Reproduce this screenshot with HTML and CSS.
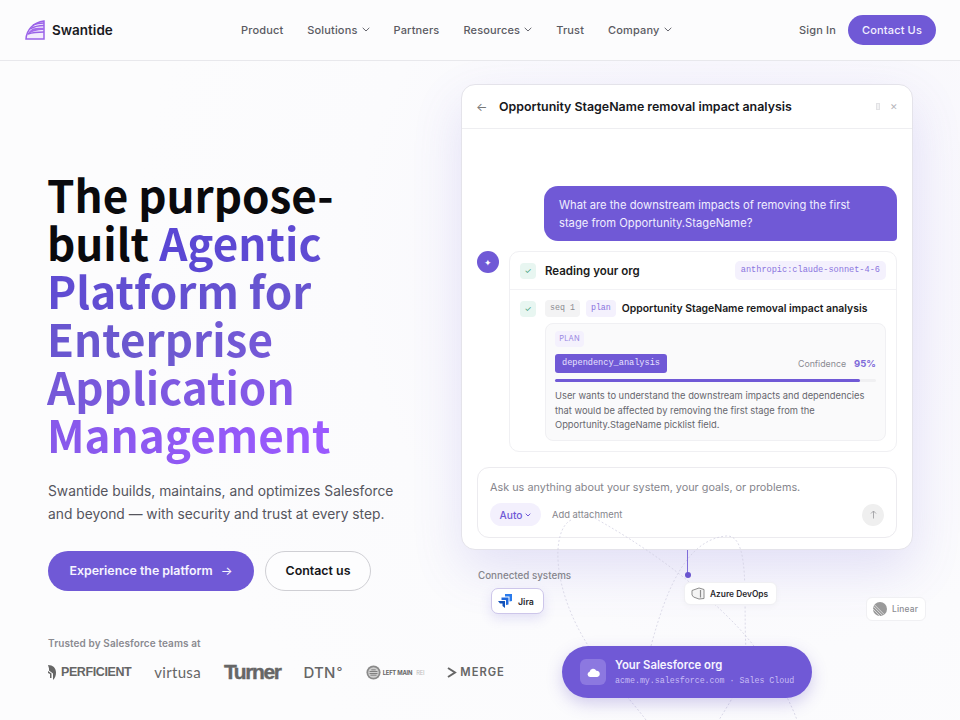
FILE: index.html
```html
<!DOCTYPE html>
<html lang="en">
<head>
<meta charset="utf-8">
<title>Swantide</title>
<link rel="stylesheet" href="styles.css">
</head>
<body>
<header class="topbar">
  <a class="brand">
    <svg class="brand-mark" width="20" height="20" viewBox="0 0 20 20" fill="none" stroke="#9a63e8" stroke-width="1.3">
      <path d="M1 19 C1.500 10 8 2.500 19 1 V19 Z" fill="#f3ebfd" stroke-width="1.500"/>
      <path d="M5 9 C9 6.500 14 5.500 19 5.500 M8 5 C11 3.600 15 3 19 3" />
      <path d="M1.200 19 C2 14 4 11 8 8.500 C12 7.800 15 7.800 19 7.800 V10 C12 10 6 11.500 2 15.500Z" fill="#a56cec" stroke="none"/>
      <path d="M3 14 C8 12.300 13 12 19 12" stroke-width="1.500"/>
    </svg>
    <span class="brand-name">Swantide</span>
  </a>
  <nav class="nav">
    <a>Product</a>
    <a>Solutions <svg class="caret" width="8" height="5" viewBox="0 0 8 5"><path d="M.7.8 4 4l3.300-3.200"/></svg></a>
    <a>Partners</a>
    <a>Resources <svg class="caret" width="8" height="5" viewBox="0 0 8 5"><path d="M.7.8 4 4l3.300-3.200"/></svg></a>
    <a>Trust</a>
    <a>Company <svg class="caret" width="8" height="5" viewBox="0 0 8 5"><path d="M.7.8 4 4l3.300-3.200"/></svg></a>
  </nav>
  <div class="top-actions">
    <a class="signin">Sign In</a>
    <a class="contact-pill">Contact Us</a>
  </div>
</header>

<main class="hero">
  <section class="intro">
    <h1 class="headline">The purpose-built <span class="grad">Agentic Platform for Enterprise Application Management</span></h1>
    <p class="lede">Swantide builds, maintains, and optimizes Salesforce and beyond — with security and trust at every step.</p>
    <div class="cta-row">
      <a class="btn-primary">Experience the platform <span class="arrow">→</span></a>
      <a class="btn-ghost">Contact us</a>
    </div>
    <p class="trusted">Trusted by Salesforce teams at</p>
    <div class="logos">
      <span class="logo logo-perficient"><svg width="10" height="15" viewBox="0 0 10 15"><path d="M0 0c5 0 8 3 8 7.500 0 3-1 5.500-3 7.500V8.500L1 5.500V3.500L0 0Z" fill="#666"/><path d="M0 6l3.500 2.500V13H2V9L0 8Z" fill="#666"/></svg>PERFICIENT</span>
      <span class="logo logo-virtusa">virtusa</span>
      <span class="logo logo-turner">Turner</span>
      <span class="logo logo-dtn">DTN<sup class="deg">°</sup></span>
      <span class="logo logo-left"><svg width="15" height="15" viewBox="0 0 17 17"><circle cx="8.500" cy="8.500" r="8" fill="#8a8a8a"/><circle cx="8.500" cy="8.500" r="6" fill="#cfcfcf"/><path d="M4 7h9v1H4zm0 2h9v1H4zm1 2h7v1H5zM6 5h5v1H6z" fill="#666"/></svg>LEFT MAIN<em class="rei">REI</em></span>
      <span class="logo logo-merge"><svg width="10" height="11" viewBox="0 0 10 11"><path d="M1 1l7 4.500-7 4.500" fill="none" stroke="#666" stroke-width="2"/></svg>MERGE</span>
    </div>
  </section>

  <section class="stage">
    <div class="panel">
      <div class="panel-head">
        <span class="back">←</span>
        <h2 class="panel-title">Opportunity StageName removal impact analysis</h2>
        <span class="head-tools"><i class="tool-box"></i><span class="tool-x">✕</span></span>
      </div>
      <div class="panel-body">
        <div class="bubble">What are the downstream impacts of removing the first stage from Opportunity.StageName?</div>
        <div class="reply">
          <span class="avatar">✦</span>
          <div class="card">
            <div class="card-head">
              <span class="check">✓</span>
              <span class="card-title">Reading your org</span>
              <span class="model-chip">anthropic:claude-sonnet-4-6</span>
            </div>
            <div class="step">
              <div class="step-row">
                <span class="check">✓</span>
                <span class="tag tag-grey">seq 1</span>
                <span class="tag tag-violet">plan</span>
                <span class="step-title">Opportunity StageName removal impact analysis</span>
              </div>
              <div class="plan-box">
                <span class="plan-label">PLAN</span>
                <div class="plan-row">
                  <span class="plan-type">dependency_analysis</span>
                  <span class="conf-label">Confidence</span>
                  <span class="conf-val">95%</span>
                </div>
                <div class="meter"><div class="meter-fill" style="width:95%"></div></div>
                <p class="plan-text">User wants to understand the downstream impacts and dependencies that would be affected by removing the first stage from the Opportunity.StageName picklist field.</p>
              </div>
            </div>
          </div>
        </div>
        <div class="composer">
          <div class="placeholder">Ask us anything about your system, your goals, or problems.</div>
          <div class="composer-row">
            <span class="auto-chip">Auto <svg width="6" height="4" viewBox="0 0 6 4"><path d="M.7.7 3 3 5.300.7" fill="none" stroke="#6f59d6" stroke-width="1"/></svg></span>
            <span class="attach">Add attachment</span>
            <span class="send"><svg width="7" height="9" viewBox="0 0 7 9" fill="none" stroke="#a0a0a4" stroke-width=".9"><path d="M3.500 8.500V1M1 3.500 3.500 1 6 3.500"/></svg></span>
          </div>
        </div>
      </div>
    </div>

    <svg class="wires" width="499" height="660" viewBox="0 0 499 660" fill="none" stroke="#cfcddf" stroke-width=".7" stroke-dasharray="2 2">
      <path d="M110 459 C90 469 90 529 130 589 C150 619 170 639 185 659"/>
      <path d="M130 455 C200 494 240 529 270 559 C300 589 325 629 336 659"/>
      <path d="M190 585 C205 529 225 479 265 475 C290 473 282 539 285 589 C285 619 270 639 258 659"/>
    </svg>
    <i class="wire-stem"></i>
    <i class="wire-dot"></i>

    <span class="sys-label">Connected systems</span>
    <div class="node node-jira">
      <svg width="14" height="14" viewBox="0 0 14 14"><path d="M7 0H14V7L11.500 7.500V2.500H7Z" fill="#2a7bec"/><path d="M3.500 3.500H10.500V10.500L8 11V6H3.500Z" fill="#1f68dc"/><path d="M0 7H7V14L4.500 12V9.500H2Z" fill="#1252b8"/></svg>
      Jira
    </div>
    <div class="node node-azure">
      <svg width="14" height="13" viewBox="0 0 14 13" fill="#f4f4f4" stroke="#8d8d8d" stroke-width="1"><path d="M1 3.500 8 1l5 1.500v9L8 12 2.500 10 1 8Z"/><path d="M9.500 3V10.500" stroke-width="1.200"/></svg>
      Azure DevOps
    </div>
    <div class="node node-linear">
      <svg width="14" height="14" viewBox="0 0 14 14"><circle cx="7" cy="7" r="7" fill="#9a9a9a"/><path d="M0 7l7 7M.6 4.500 9.500 13.400M1.500 2.800l9.700 9.700" stroke="#e8e8e8" stroke-width=".8"/></svg>
      Linear
    </div>
    <div class="org-pill">
      <span class="org-icon"><svg width="13" height="9" viewBox="0 0 13 9"><path d="M3 9A2.700 2.700 0 0 1 2.600 3.700 3.600 3.600 0 0 1 9.300 2.700 3.200 3.200 0 0 1 10.300 9Z" fill="#fff"/></svg></span>
      <span class="org-text">
        <span class="org-title">Your Salesforce org</span>
        <span class="org-sub">acme.my.salesforce.com · Sales Cloud</span>
      </span>
    </div>
  </section>
</main>
</body>
</html>
```

FILE: styles.css
```css
* { box-sizing: border-box; }
html, body { margin: 0; height: 720px; overflow: hidden; }
body { background: #fcfcfd; font-family: Inter, "Liberation Sans", sans-serif; color: #111; }

.topbar { height: 61px; display: flex; align-items: center; padding: 0 24px 1px 25px; border-bottom: 1px solid #e8e8ec; background: #fcfcfd; }
.brand { display: flex; align-items: center; gap: 7px; width: 216px; }
.brand-mark { display: block; }
.brand-name { font-size: 13.500px; font-weight: 600; color: #1a1a1f; }
.nav { display: flex; gap: 24px; font-size: 11px; font-weight: 500; color: #5a5a62; letter-spacing: .15px; }
.nav a { display: flex; align-items: center; gap: 4px; }
.caret { fill: none; stroke: #66666e; stroke-width: 1; }
.top-actions { margin-left: auto; display: flex; align-items: center; gap: 12px; font-size: 11px; font-weight: 500; letter-spacing: .15px; }
.signin { color: #5a5a62; }
.contact-pill { height: 30px; width: 88px; border-radius: 15px; background: #7059d6; color: #f3f0ff; display: flex; align-items: center; justify-content: center; }

.hero { position: relative; display: flex; height: 659px; overflow: hidden; background: radial-gradient(circle at 78% 30%, #f5f3fc 0, #fbfbfd 45%, #fcfcfd 70%); }
.intro { flex: 0 0 461px; min-width: 0; padding: 109px 0 0 48px; }
.headline { margin: 0 0 0 -1px; width: 300px; font-family: "Noto Sans CJK SC", "Noto Sans", sans-serif; font-size: 44px; line-height: 48px; font-weight: 700; color: #0a0a0d; }
.grad { background: linear-gradient(90deg, #5a46d4 0%, #6c59cf 45%, #9b59ff 100%); -webkit-background-clip: text; background-clip: text; color: transparent; }
.lede { margin: 22px 0 0; width: 360px; font-size: 13.800px; line-height: 23px; color: #55555d; }
.cta-row { display: flex; gap: 11px; margin-top: 25px; }
.btn-primary { height: 40px; width: 206px; padding-bottom: 1px; border-radius: 20px; background: #7059d6; color: #f6f4ff; font-size: 12.400px; font-weight: 600; display: flex; align-items: center; justify-content: center; gap: 8px; }
.arrow { font-weight: 400; }
.btn-ghost { height: 40px; width: 106px; padding-bottom: 1px; border-radius: 20px; border: 1px solid #cfcfd4; background: #fdfdfe; color: #16161a; font-size: 12.400px; font-weight: 600; display: flex; align-items: center; justify-content: center; }
.trusted { margin: 46px 0 0; font-size: 10px; line-height: 13px; font-weight: 600; color: #8a8a90; letter-spacing: .1px; }
.logos { display: flex; align-items: center; gap: 23px; height: 24px; margin-top: 10px; color: #666; }
.logo { display: inline-flex; align-items: center; white-space: nowrap; }
.logo-perficient { gap: 3px; font-size: 12.500px; font-weight: 700; letter-spacing: -.4px; font-family: "Liberation Sans", sans-serif; }
.logo-virtusa { font-size: 15px; font-family: Lato, sans-serif; letter-spacing: .3px; }
.logo-turner { font-size: 21px; font-weight: 800; letter-spacing: -1.400px; font-family: "Liberation Sans", sans-serif; -webkit-text-stroke: .4px #666; }
.logo-dtn { font-size: 15px; font-weight: 500; letter-spacing: .2px; }
.deg { font-size: 13px; line-height: 0; margin-left: 1px; }
.logo-left { gap: 2px; font-size: 5.800px; font-weight: 700; letter-spacing: -.2px; }
.rei { font-style: normal; color: #bbb; font-weight: 400; margin-left: 2px; }
.logo-merge { gap: 3px; font-size: 11.200px; font-weight: 600; letter-spacing: 1px; }

.stage { position: relative; flex: 1; padding-top: 23px; }
.panel { position: relative; width: 452px; height: 466px; border: 1px solid #e4e3ea; border-radius: 14px; background: #fff; box-shadow: 0 20px 50px rgba(108, 92, 212, .16); }
.panel-head { height: 44px; padding: 0 14px; display: flex; align-items: center; border-bottom: 1px solid #eeeef1; }
.back { width: 23px; font-size: 12px; color: #777; }
.panel-title { margin: 0; font-size: 12.400px; font-weight: 600; color: #17171c; }
.head-tools { margin-left: auto; display: flex; align-items: center; gap: 10px; }
.tool-box { width: 4px; height: 7px; border: 1px solid #e2e2e5; background: #f2f2f3; }
.tool-x { font-size: 9px; color: #b5b5ba; }
.panel-body { padding: 57px 15px 0; display: flex; flex-direction: column; }
.bubble { align-self: flex-end; width: 353px; height: 55px; padding: 11px 15px 0; border-radius: 14px 14px 4px 14px; background: #7059d6; color: #f1eeff; font-size: 11.200px; line-height: 17.500px; }
.reply { display: flex; gap: 10px; margin-top: 10px; }
.avatar { flex: 0 0 22px; height: 22px; border-radius: 50%; background: #7059d6; color: #fff; font-size: 9px; display: flex; align-items: center; justify-content: center; }
.card { flex: 1; height: 201px; border: 1px solid #f0f0f3; border-radius: 10px; background: #fff; }
.card-head { height: 38px; padding: 0 10px; display: flex; align-items: center; border-bottom: 1px solid #f2f2f5; }
.check { flex: 0 0 16px; height: 16px; border-radius: 4px; background: #e8f6f1; color: #3f9f80; font-size: 8px; display: flex; align-items: center; justify-content: center; }
.card-title { margin-left: 9px; font-size: 11.500px; font-weight: 600; color: #1b1b20; }
.model-chip { margin-left: auto; padding: 0 6px; height: 19px; line-height: 18px; border-radius: 5px; background: #f4f1fd; color: #8a74dd; font-family: "Liberation Mono", monospace; font-size: 8.600px; }
.step { padding: 10px 10px 0; }
.step-row { display: flex; align-items: center; gap: 6px; height: 17px; }
.step-row .check { margin-right: 3px; }
.tag { height: 17px; padding: 0 5px; border-radius: 4px; font-family: "Liberation Mono", monospace; font-size: 8.300px; line-height: 16px; }
.tag-grey { background: #f3f3f4; color: #8a8a8f; }
.tag-violet { background: #f4f1fd; color: #8a74dd; }
.step-title { font-size: 10.400px; font-weight: 600; color: #1b1b20; white-space: nowrap; }
.plan-box { margin: 6px 0 0 25px; height: 118px; padding: 7px 9px; border: 1px solid #f0f0f3; border-radius: 8px; background: #fafafb; }
.plan-label { display: block; width: 29px; height: 16px; border-radius: 4px; background: #f4f1fd; color: #9a88e2; font-size: 7.500px; line-height: 15px; text-align: center; letter-spacing: .2px; }
.plan-row { display: flex; align-items: center; margin-top: 7px; height: 19px; }
.plan-type { height: 19px; width: 112px; border-radius: 3px; background: #7059d6; color: #e9e4ff; font-family: "Liberation Mono", monospace; font-size: 8.600px; line-height: 18px; text-align: center; }
.conf-label { margin-left: auto; font-size: 8.800px; color: #8b8b92; }
.conf-val { margin-left: 8px; font-size: 9.500px; font-weight: 700; color: #7f6bd9; }
.meter { height: 3px; margin-top: 6px; background: #f0f0f2; border-radius: 2px; }
.meter-fill { height: 100%; background: #7059d6; border-radius: 2px; }
.plan-text { margin: 7px 0 0; font-size: 9.350px; line-height: 14.700px; color: #66666d; }
.composer { margin-top: 15px; height: 71px; padding: 12px 12px 0; border: 1px solid #ecebef; border-radius: 12px; background: #fff; }
.placeholder { font-size: 10.850px; line-height: 14px; color: #85858c; }
.composer-row { display: flex; align-items: center; margin-top: 9px; height: 23px; }
.auto-chip { width: 51px; height: 23px; border-radius: 12px; background: #f3f0fd; color: #6f59d6; font-size: 10.200px; font-weight: 500; display: flex; align-items: center; justify-content: center; gap: 3px; }
.attach { margin-left: 11px; font-size: 9.400px; color: #85858c; }
.send { margin-left: auto; width: 22px; height: 22px; border-radius: 50%; background: #efefef; display: flex; align-items: center; justify-content: center; }

.wires { position: absolute; left: 0; top: 0; pointer-events: none; }
.wire-stem { position: absolute; left: 226px; top: 489px; width: 1px; height: 25px; background: #7f6cd9; }
.wire-dot { position: absolute; left: 224px; top: 511px; width: 6px; height: 6px; border-radius: 50%; background: #6a55cf; }
.sys-label { position: absolute; left: 17px; top: 508px; font-size: 9.800px; line-height: 13px; font-weight: 500; color: #85858c; }
.node { position: absolute; display: flex; align-items: center; background: #fff; white-space: nowrap; }
.node-jira { left: 30px; top: 527px; width: 53px; height: 26px; gap: 6px; padding-left: 6px; border: 1px solid #cdc6ea; border-radius: 7px; font-size: 8.800px; font-weight: 600; color: #2b2b30; box-shadow: 0 5px 12px rgba(108, 92, 212, .16); }
.node-azure { left: 223px; top: 521px; width: 93px; height: 23px; gap: 5px; padding-left: 6px; border: 1px solid #f0f0f3; border-radius: 6px; font-size: 8.400px; font-weight: 600; color: #2b2b30; box-shadow: 0 2px 6px rgba(30, 30, 60, .03); }
.node-linear { left: 405px; top: 536px; width: 60px; height: 24px; gap: 5px; padding-left: 6px; border: 1px solid #f0f0f3; border-radius: 6px; font-size: 8.400px; font-weight: 500; color: #8b8b92; letter-spacing: .2px; }
.org-pill { position: absolute; left: 101px; top: 585px; width: 250px; height: 52px; padding-left: 18px; display: flex; align-items: center; gap: 9px; border-radius: 26px; background: #7059d6; box-shadow: 0 6px 16px rgba(90, 70, 190, .25); }
.org-icon { width: 26px; height: 26px; border-radius: 6px; background: #8c78e0; display: flex; align-items: center; justify-content: center; }
.org-text { display: flex; flex-direction: column; gap: 1px; padding-top: 2px; }
.org-title { font-size: 11.300px; line-height: 15px; font-weight: 600; color: #f6f4ff; }
.org-sub { font-family: "Liberation Mono", monospace; font-size: 8.300px; line-height: 14px; color: #c9bef5; }
```
